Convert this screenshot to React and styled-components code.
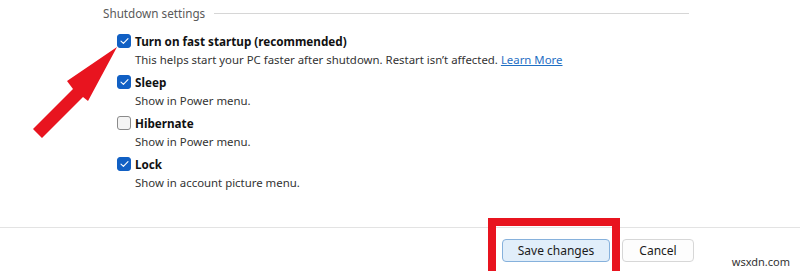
import React from 'react'
import styled, { createGlobalStyle } from 'styled-components'

const Global = createGlobalStyle`
  body {
    margin: 0;
    background: #fff;
    font-family: "Noto Sans", "Open Sans", sans-serif;
  }
`

const Frame = styled.div`
  position: relative;
  width: 800px;
  height: 271px;
  overflow: hidden;
  display: flex;
  flex-direction: column;
  background: #fff;
  color: #1b1b1b;
`

const Main = styled.div`
  flex: 1;
  padding: 4px 111px 0 103px;
`

const GroupHead = styled.div`
  display: flex;
  align-items: center;
  gap: 9px;
  height: 18px;
  margin-bottom: 10px;
`

const GroupLabel = styled.span`
  font-size: 11.7px;
  color: #5a5a5a;
  white-space: nowrap;
`

const Rule = styled.div`
  flex: 1;
  height: 1px;
  background: #d6d6d6;
`

const Options = styled.div`
  padding-left: 14px;
`

const Option = styled.div`
  margin-bottom: 4px;
`

const TitleRow = styled.label`
  display: flex;
  align-items: center;
  gap: 4px;
  height: 18px;
`

const Box = styled.span`
  width: 14px;
  height: 14px;
  box-sizing: border-box;
  border-radius: 3px;
  display: flex;
  align-items: center;
  justify-content: center;
  background: ${p => (p.$checked ? '#1160c4' : '#f4f4f4')};
  border: 1px solid ${p => (p.$checked ? '#1160c4' : '#8a8a8a')};
`

const Title = styled.span`
  font-size: 11.7px;
  font-weight: 700;
  color: #111;
`

const Desc = styled.div`
  padding-left: 18px;
  height: 19px;
  line-height: 19px;
  font-size: 11.4px;
  color: #333;
  white-space: nowrap;
`

const Link = styled.a`
  color: #1f6fc4;
  text-decoration: underline;
`

const Footer = styled.div`
  height: 44px;
  border-top: 1px solid #e3e3e3;
  display: flex;
  justify-content: flex-end;
  align-items: flex-start;
  gap: 12px;
  padding: 11px 106px 0 0;
  box-sizing: border-box;
`

const Button = styled.button`
  height: 23px;
  box-sizing: border-box;
  padding: 0;
  width: ${p => p.$w}px;
  border-radius: 4px;
  font-family: inherit;
  font-size: 12px;
  color: #1b1b1b;
  background: ${p => (p.$primary ? '#e1eefa' : '#fdfdfd')};
  border: 1px solid ${p => (p.$primary ? '#86b1dc' : '#d7d7d7')};
`

const Overlay = styled.svg`
  position: absolute;
  left: 0;
  top: 0;
  pointer-events: none;
`

const Highlight = styled.div`
  position: absolute;
  left: 488px;
  top: 218px;
  width: 132px;
  height: 70px;
  box-sizing: border-box;
  border: 8px solid #e8141f;
  pointer-events: none;
`

const Watermark = styled.span`
  position: absolute;
  right: 10px;
  bottom: 2px;
  font-size: 11px;
  color: #333;
  background: #fff;
`

const Check = () => (
  <svg width="9" height="8" viewBox="0 0 9 8">
    <path d="M1 4.2 L3.4 6.4 L8 1.6" fill="none" stroke="#fff" strokeWidth="1.1" strokeLinecap="round" strokeLinejoin="round" />
  </svg>
)

const items = [
  { title: 'Turn on fast startup (recommended)', checked: true, desc: 'This helps start your PC faster after shutdown. Restart isn\u2019t affected.', link: true },
  { title: 'Sleep', checked: true, desc: 'Show in Power menu.' },
  { title: 'Hibernate', checked: false, desc: 'Show in Power menu.' },
  { title: 'Lock', checked: true, desc: 'Show in account picture menu.' },
]

const App = () => (
  <React.Fragment>
    <Global />
    <Frame>
      <Main>
        <GroupHead>
          <GroupLabel>Shutdown settings</GroupLabel>
          <Rule />
        </GroupHead>
        <Options>
          {items.map(it => (
            <Option key={it.title}>
              <TitleRow>
                <Box $checked={it.checked}>{it.checked && <Check />}</Box>
                <Title>{it.title}</Title>
              </TitleRow>
              <Desc>
                {it.desc}
                {it.link && <> <Link>Learn More</Link></>}
              </Desc>
            </Option>
          ))}
        </Options>
      </Main>
      <Footer>
        <Button $primary $w={108}>Save changes</Button>
        <Button $w={72}>Cancel</Button>
      </Footer>
      <Overlay width="800" height="271">
        <polygon points="117,47 88,101 83,97 42,138 33,129 73,89 67,81" fill="#e8141f" />
      </Overlay>
      <Highlight />
      <Watermark>wsxdn.com</Watermark>
    </Frame>
  </React.Fragment>
)

export default App
